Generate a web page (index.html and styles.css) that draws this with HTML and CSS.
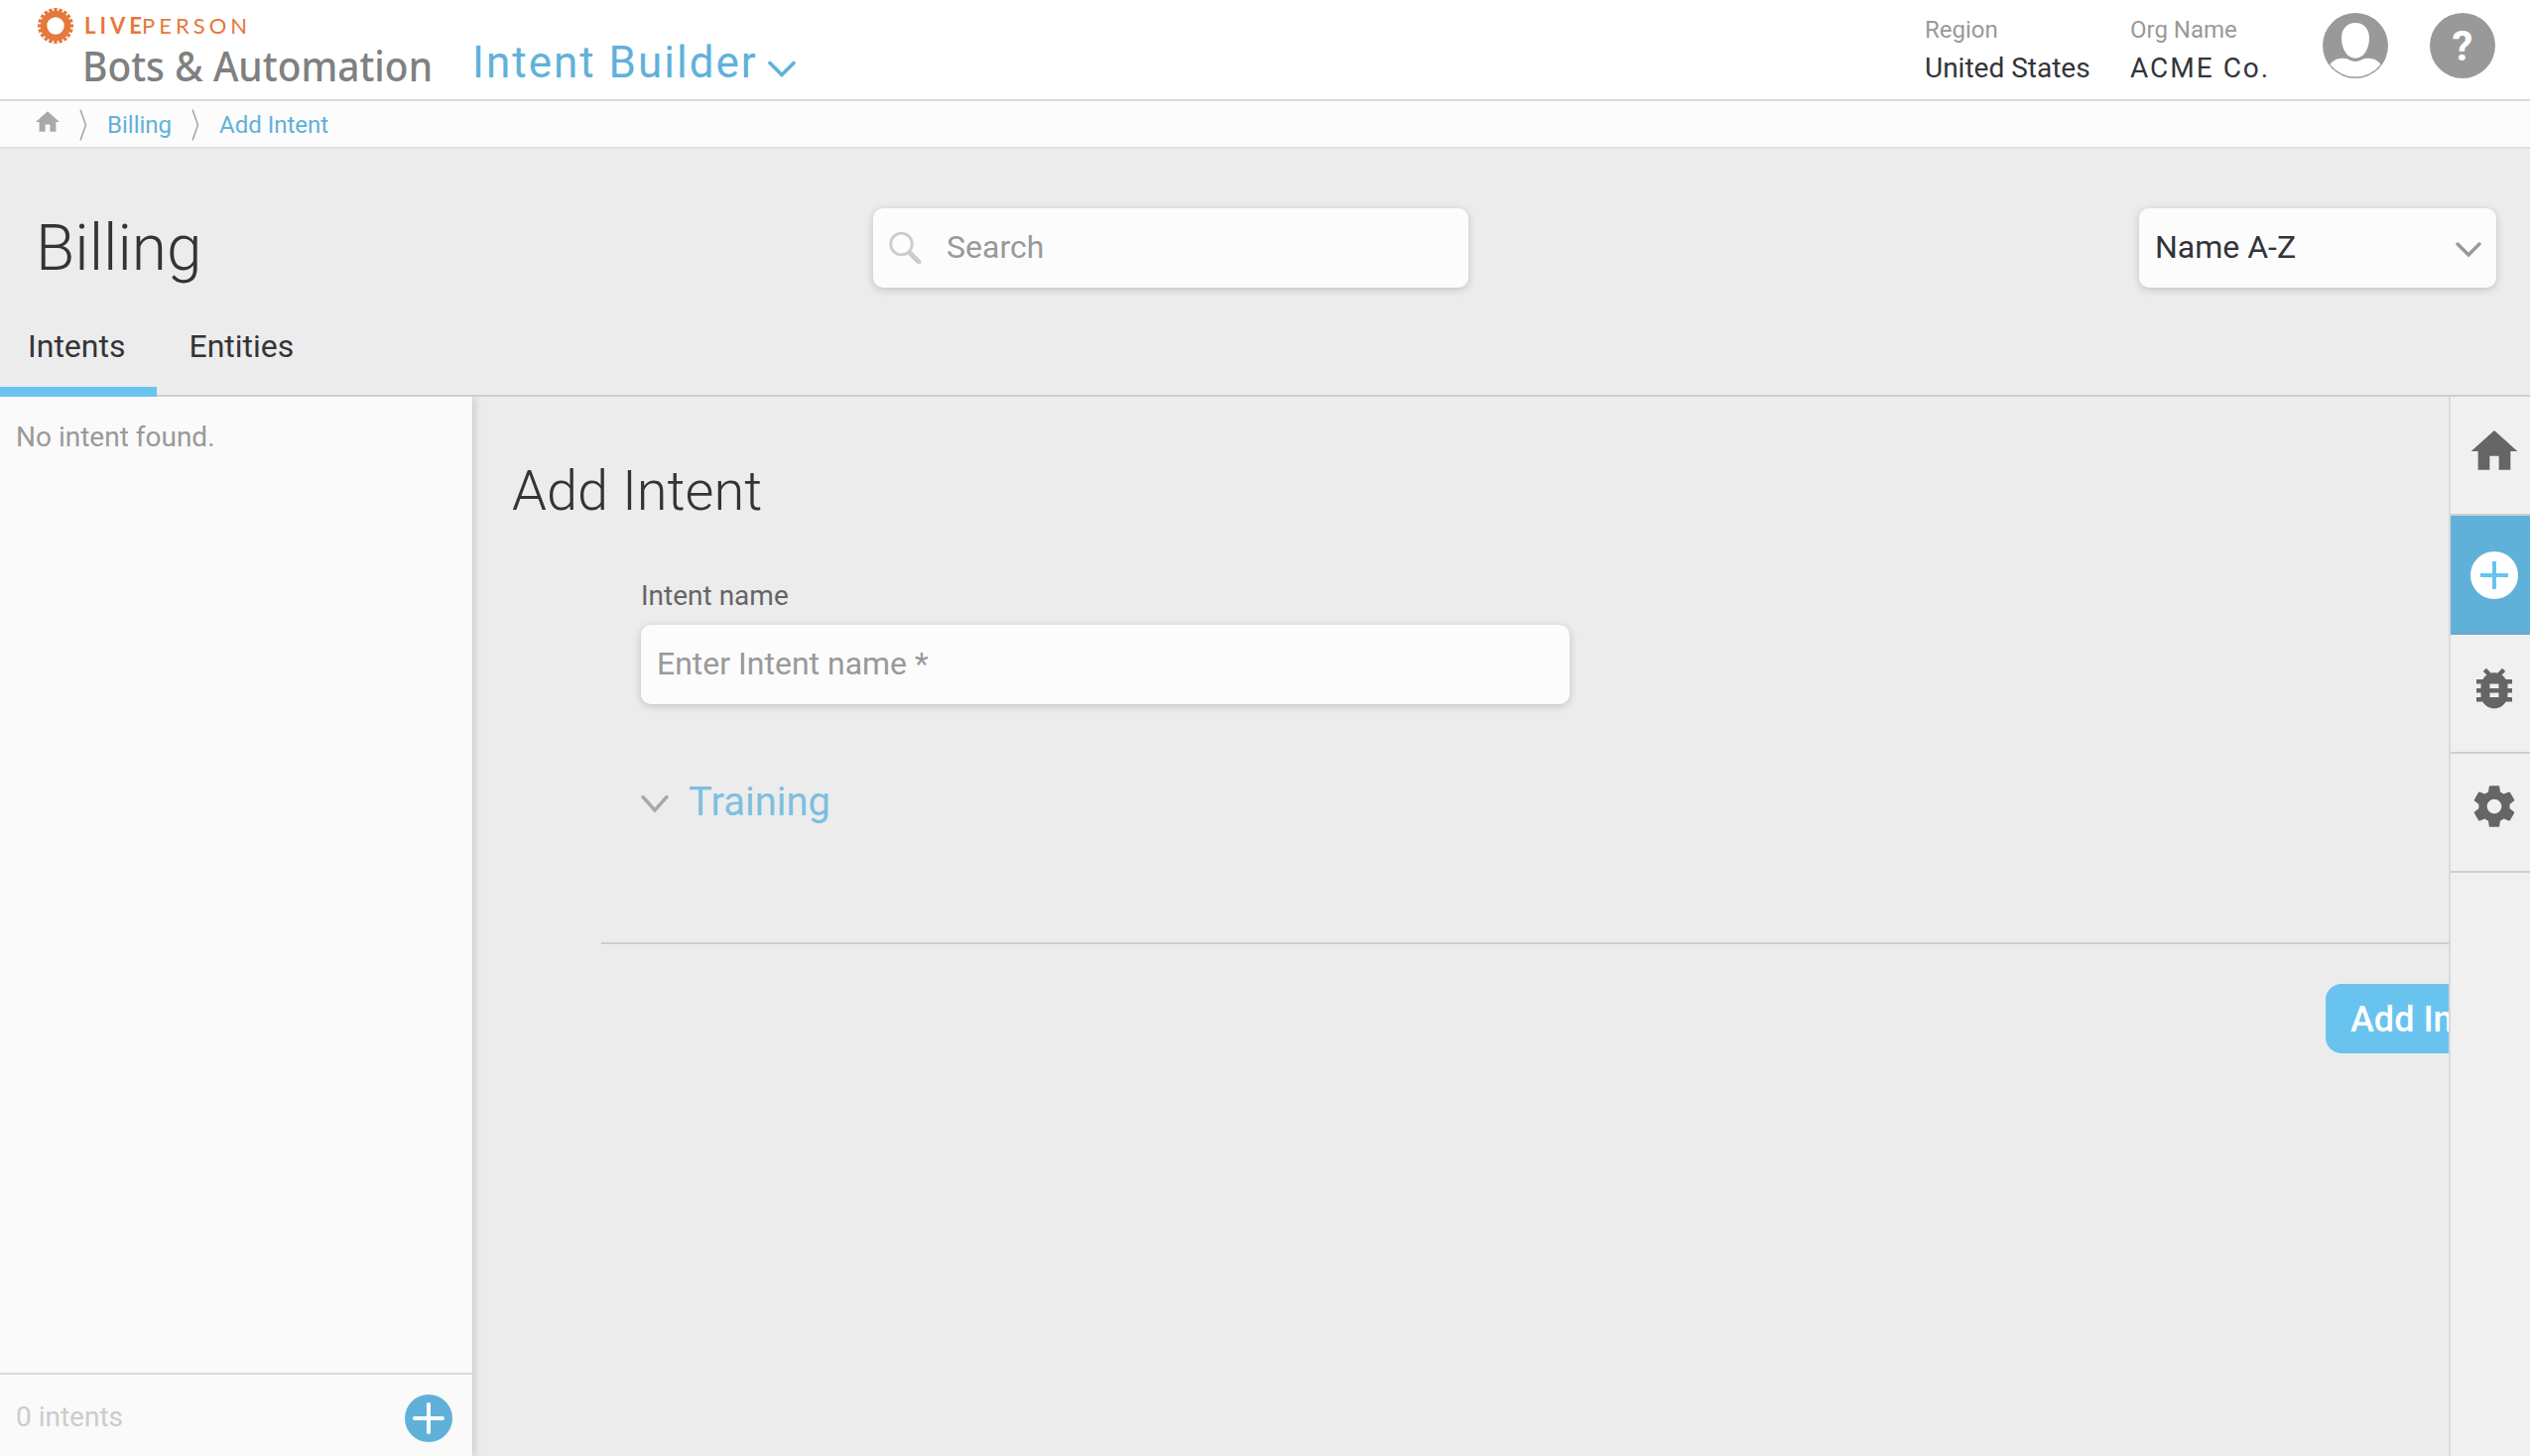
FILE: index.html
```html
<!DOCTYPE html>
<html lang="en">
<head>
<meta charset="utf-8">
<title>Intent Builder</title>
<link rel="stylesheet" href="styles.css">
</head>
<body>
<header class="topbar">
  <div class="brand">
    <div class="brand-top">
      <svg class="brand-gear" viewBox="-18 -18 36 36">
        <circle r="12" fill="none" stroke="#e5783c" stroke-width="6.600"/>
        <circle r="16.400" fill="none" stroke="#e5783c" stroke-width="3.200" pathLength="200" stroke-dasharray="6.600 3.400" stroke-dashoffset="3.300"/>
      </svg>
      <span class="brand-live">LIVE</span><span class="brand-person">PERSON</span>
    </div>
    <div class="brand-name">Bots &amp; Automation</div>
  </div>
  <div class="app-switch">
    <span>Intent Builder</span>
    <svg width="28" height="18" viewBox="0 0 28 18"><path d="M2 2.500l12 12 12-12" fill="none" stroke="#60b1da" stroke-width="3.600" stroke-linecap="round"/></svg>
  </div>
  <div class="meta region"><span class="meta-label">Region</span><span class="meta-value">United States</span></div>
  <div class="meta org"><span class="meta-label">Org Name</span><span class="meta-value spaced">ACME Co.</span></div>
  <svg class="avatar" viewBox="0 0 66 66">
    <circle cx="33" cy="33" r="33" fill="#999"/>
    <path d="M33 10c8.500 0 14 6 14 15.500C47 36 41.500 45.800 33 45.800S19 36 19 25.500C19 16 24.500 10 33 10z" fill="#fff"/>
    <path d="M7.500 52c3-4.500 8-6.500 14-6.200 4.500.2 6.500 3.200 11.500 3.200s7-3 11.500-3.200c6-.3 11 1.700 14 6.200A32.300 32.300 0 0 1 7.500 52z" fill="#fff"/>
  </svg>
  <div class="help">?</div>
</header>

<nav class="crumbs">
  <svg class="crumb-home" viewBox="2 3 20 17"><path d="M10 20v-6h4v6h5v-8h3L12 3 2 12h3v8z" fill="#a9a9a9"/></svg>
  <svg class="crumb-sep" viewBox="0 0 8 32"><path d="M1 0.500L6.500 16 1 31.500" fill="none" stroke="#a3a3a3" stroke-width="1.500"/></svg>
  <a class="crumb">Billing</a>
  <svg class="crumb-sep" viewBox="0 0 8 32"><path d="M1 0.500L6.500 16 1 31.500" fill="none" stroke="#a3a3a3" stroke-width="1.500"/></svg>
  <a class="crumb">Add Intent</a>
</nav>

<section class="band">
  <div class="band-row">
    <h1 class="title">Billing</h1>
    <div class="field search">
      <svg width="34" height="34" viewBox="0 0 34 34"><circle cx="12.500" cy="14" r="10.800" fill="none" stroke="#ccc" stroke-width="2.800"/><path d="M21 23l9 9" stroke="#ccc" stroke-width="5" stroke-linecap="round"/></svg>
      <span>Search</span>
    </div>
    <div class="field sort">
      <span>Name A-Z</span>
      <svg width="26" height="18" viewBox="0 0 26 18"><path d="M2 3l11 11L24 3" fill="none" stroke="#999" stroke-width="3.400" stroke-linecap="round"/></svg>
    </div>
  </div>
  <div class="tabs">
    <div class="tab active">Intents</div>
    <div class="tab">Entities</div>
  </div>
</section>

<div class="workspace">
  <aside class="sidebar">
    <p class="empty">No intent found.</p>
    <div class="sidebar-foot">
      <span>0 intents</span>
      <svg width="48" height="48" viewBox="0 0 48 48"><circle cx="24" cy="24" r="24" fill="#60b1da"/><path d="M24 10v28M10 24h28" stroke="#fff" stroke-width="4" stroke-linecap="round"/></svg>
    </div>
  </aside>

  <main class="main">
    <h2 class="subtitle">Add Intent</h2>
    <div class="form">
      <label class="label">Intent name</label>
      <div class="field name-input">Enter Intent name *</div>
      <div class="training">
        <svg width="28" height="20" viewBox="0 0 28 20"><path d="M2 2.500l12 13.500L26 2.500" fill="none" stroke="#a8a8a8" stroke-width="3.400" stroke-linecap="round"/></svg>
        <span>Training</span>
      </div>
    </div>
    <div class="actions">
      <div class="button">Add Intent</div>
    </div>
  </main>

  <nav class="rail">
    <div class="rail-item home">
      <svg width="56" height="56" viewBox="0 0 24 24"><path d="M10 20v-6h4v6h5v-8h3L12 3 2 12h3v8z" fill="#656567"/></svg>
    </div>
    <div class="rail-item active">
      <svg width="48" height="48" viewBox="0 0 48 48"><circle cx="24" cy="24" r="24" fill="#fff"/><path d="M24 10v28M10 24h28" stroke="#69c3ef" stroke-width="4"/></svg>
    </div>
    <div class="rail-item">
      <svg width="54" height="54" viewBox="0 0 24 24"><path d="M20 8h-2.810c-.45-.78-1.070-1.450-1.820-1.960L17 4.410 15.590 3l-2.170 2.170C12.960 5.060 12.490 5 12 5c-.49 0-.96.06-1.410.17L8.410 3 7 4.410l1.620 1.630C7.880 6.550 7.260 7.220 6.810 8H4v2h2.090c-.05.33-.09.66-.09 1v1H4v2h2v1c0 .34.04.67.09 1H4v2h2.810c1.040 1.790 2.970 3 5.190 3s4.150-1.210 5.190-3H20v-2h-2.090c.05-.33.09-.66.09-1v-1h2v-2h-2v-1c0-.34-.04-.67-.09-1H20V8zm-6 8h-4v-2h4v2zm0-4h-4v-2h4v2z" fill="#656567"/></svg>
    </div>
    <div class="rail-item settings">
      <svg width="50" height="50" viewBox="0 0 24 24"><path d="M19.430 12.980c.04-.32.07-.64.07-.98s-.03-.66-.07-.98l2.110-1.650c.19-.15.24-.42.12-.64l-2-3.460c-.12-.22-.39-.3-.61-.22l-2.490 1c-.52-.4-1.080-.73-1.690-.98l-.38-2.650C14.460 2.180 14.250 2 14 2h-4c-.25 0-.46.18-.49.42l-.38 2.650c-.61.25-1.170.59-1.690.98l-2.490-1c-.23-.09-.49 0-.61.22l-2 3.460c-.13.22-.07.49.12.64l2.110 1.650c-.04.32-.07.65-.07.98s.03.66.07.98l-2.110 1.650c-.19.15-.24.42-.12.64l2 3.460c.12.22.39.3.61.22l2.490-1c.52.4 1.080.73 1.690.98l.38 2.650c.03.24.24.42.49.42h4c.25 0 .46-.18.49-.42l.38-2.650c.61-.25 1.170-.59 1.690-.98l2.490 1c.23.09.49 0 .61-.22l2-3.460c.12-.22.07-.49-.12-.64l-2.110-1.650zM12 15.500c-1.930 0-3.500-1.570-3.500-3.500s1.570-3.500 3.500-3.500 3.500 1.570 3.500 3.500-1.570 3.500-3.500 3.500z" fill="#656567"/></svg>
    </div>
  </nav>
</div>
</body>
</html>
```
FILE: styles.css
```css
* { box-sizing: border-box; }
body {
  margin: 0;
  height: 1468px;
  display: flex;
  flex-direction: column;
  overflow: hidden;
  background: #ececec;
  color: #333438;
  font-family: Roboto, "Liberation Sans", sans-serif;
  white-space: nowrap;
}
h1, h2, p { margin: 0; }
svg { display: block; flex: none; }

/* Top bar */
.topbar {
  flex: none;
  height: 102px;
  display: flex;
  align-items: flex-start;
  background: #fff;
  border-bottom: 2px solid #dadae0;
}
.brand { width: 476px; padding: 7px 0 0 37px; flex: none; }
.brand-top {
  display: flex;
  align-items: center;
  height: 37px;
  color: #e5783c;
  font: 22px/37px Lato, sans-serif;
}
.brand-gear { width: 36px; height: 36px; margin: 0 11px 0 1px; }
.brand-live { width: 58px; font-weight: 700; letter-spacing: 4px; }
.brand-person { font-weight: 400; letter-spacing: 4px; }
.brand-name {
  margin: -6px 0 0 46px;
  font: 500 42px/56px "Noto Sans", sans-serif;
  color: #808080;
  transform: scaleX(0.926);
  transform-origin: left;
}
.app-switch {
  display: flex;
  align-items: center;
  gap: 10px;
  padding-top: 38px;
  flex: 1;
  color: #60b1da;
  font-size: 44px;
  line-height: 50px;
  letter-spacing: 2px;
}
.app-switch svg { margin-top: 14px; }
.meta { display: flex; flex-direction: column; padding-top: 15px; }
.region { width: 207px; }
.org { width: 194px; }
.meta-label { font-size: 24px; line-height: 30px; color: #999; }
.meta-value { font-size: 28px; line-height: 34px; margin-top: 7px; }
.spaced { letter-spacing: 2px; }
.avatar { width: 66px; height: 66px; margin: 13px 42px 0 0; }
.help {
  width: 66px;
  height: 66px;
  margin: 13px 35px 0 0;
  border-radius: 50%;
  background: #999;
  color: #fff;
  font-size: 42px;
  font-weight: 700;
  line-height: 67px;
  text-align: center;
}

/* Breadcrumbs */
.crumbs {
  flex: none;
  height: 48px;
  display: flex;
  align-items: center;
  padding-left: 36px;
  background: #fcfcfc;
  border-bottom: 2px solid #dfdfe3;
  font-size: 24px;
}
.crumb-home { width: 24px; height: 21px; margin: 0 20px 5px 0; }
.crumb-sep { width: 8px; height: 32px; margin: 1px 20px 0 0; }
.crumb { color: #60b1da; margin: 2px 20px 0 0; }

/* Title band */
.band {
  flex: none;
  height: 250px;
  display: flex;
  flex-direction: column;
  justify-content: space-between;
  padding-top: 60px;
  border-bottom: 2px solid #cdcdd3;
}
.band-row {
  display: grid;
  grid-template-columns: 844px 600px 360px;
  justify-content: start;
  align-items: center;
  height: 80px;
  padding-left: 36px;
}
.title { font-size: 64px; font-weight: 300; line-height: 78px; padding-top: 2px; }
.field {
  display: flex;
  align-items: center;
  height: 80px;
  border-radius: 10px;
  background: #fcfcfc;
  box-shadow: 0 2px 8px rgba(0, 0, 0, 0.180);
  font-size: 32px;
  line-height: 38px;
  color: #999;
}
.search { padding: 0 0 2px 16px; gap: 24px; }
.sort {
  margin-left: 676px;
  width: 360px;
  padding: 0 15px 2px 16px;
  justify-content: space-between;
  color: #333438;
}
.sort svg { margin-top: 5px; }
.tabs { display: flex; height: 108px; margin-bottom: -2px; }
.tab {
  padding: 38px 32px 0 32.5px;
  font-size: 32px;
  line-height: 38px;
}
.tab.active {
  width: 158px;
  padding-left: 28px;
  border-bottom: 10px solid #69c3ef;
}

/* Work area */
.workspace { flex: 1; display: flex; min-height: 0; }
.sidebar {
  width: 476px;
  flex: none;
  display: flex;
  flex-direction: column;
  justify-content: space-between;
  background: #fafafa;
  box-shadow: 2px 0 8px rgba(0, 0, 0, 0.160);
  clip-path: inset(0 -20px 0 0);
}
.empty { padding: 24px 16px 0; font-size: 28px; line-height: 34px; color: #999; }
.sidebar-foot {
  height: 84px;
  display: flex;
  align-items: center;
  justify-content: space-between;
  padding: 6px 20px 0 16px;
  border-top: 2px solid #dadae0;
  font-size: 28px;
  color: #ccc;
}
.sidebar-foot span { margin-bottom: 4px; }
.main { flex: 1; min-width: 0; overflow: hidden; padding: 61px 0 0 40px; }
.subtitle { font-size: 56px; font-weight: 300; line-height: 68px; }
.form {
  height: 423px;
  margin-left: 90px;
  padding: 55px 0 0 40px;
  border-bottom: 2px solid #cdcdd3;
}
.label { display: block; font-size: 28px; line-height: 34px; color: #656567; }
.name-input { width: 936px; margin-top: 12px; padding: 0 16px 2px; }
.training {
  display: flex;
  align-items: center;
  gap: 20px;
  margin-top: 75px;
  font-size: 40px;
  line-height: 48px;
  color: #7cbfe0;
}
.training svg { margin-top: 4px; }
.actions { padding: 40px 0 0 1828px; }
.button {
  width: 230px;
  height: 70px;
  padding-left: 25px;
  border-radius: 16px;
  background: #69c3ef;
  color: #fff;
  font-size: 36px;
  font-weight: 500;
  line-height: 72px;
}
.rail {
  width: 82px;
  flex: none;
  background: #f0f0f0;
  border-left: 2px solid #d9d9dc;
}
.rail-item {
  height: 120px;
  display: flex;
  align-items: center;
  justify-content: center;
  padding: 0 0 10px 8px;
  border-bottom: 2px solid #cdcdd3;
}
.rail-item.home { padding-bottom: 8px; }
.rail-item.settings { padding-bottom: 12px; }
.rail-item.active { background: #60b1da; border-bottom-color: #6fa8c8; padding: 2px 0 0 8px; }
```
